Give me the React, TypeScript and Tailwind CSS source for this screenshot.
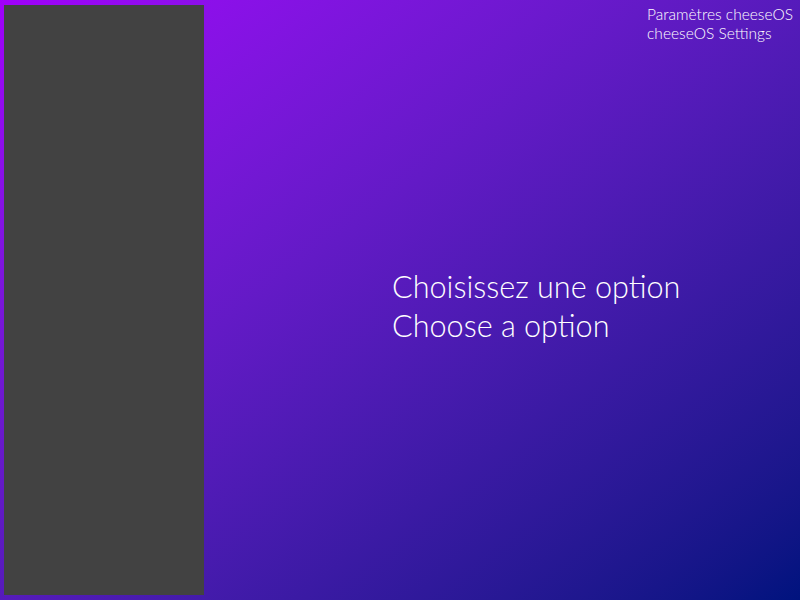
export default function App() {
  return (
    <div
      className="flex h-[600px] w-[800px] bg-linear-to-br from-[#a000fb] to-[#00137e] text-white"
      style={{ fontFamily: "Lato, 'Noto Sans', sans-serif" }}
    >
      <aside className="ml-[4px] mt-[5px] mb-[5px] w-[200px] bg-[#424242]" />
      <main className="flex flex-1 flex-col">
        <div className="flex justify-end pr-[7px] pt-[5px]">
          <div className="text-[15.5px] leading-[19px] font-light">
            <div>Paramètres cheeseOS</div>
            <div>cheeseOS Settings</div>
          </div>
        </div>
        <div className="pl-[188px] pt-[224px] text-[30.6px] leading-[39px] font-light">
          <div>Choisissez une option</div>
          <div>Choose a option</div>
        </div>
      </main>
    </div>
  );
}
